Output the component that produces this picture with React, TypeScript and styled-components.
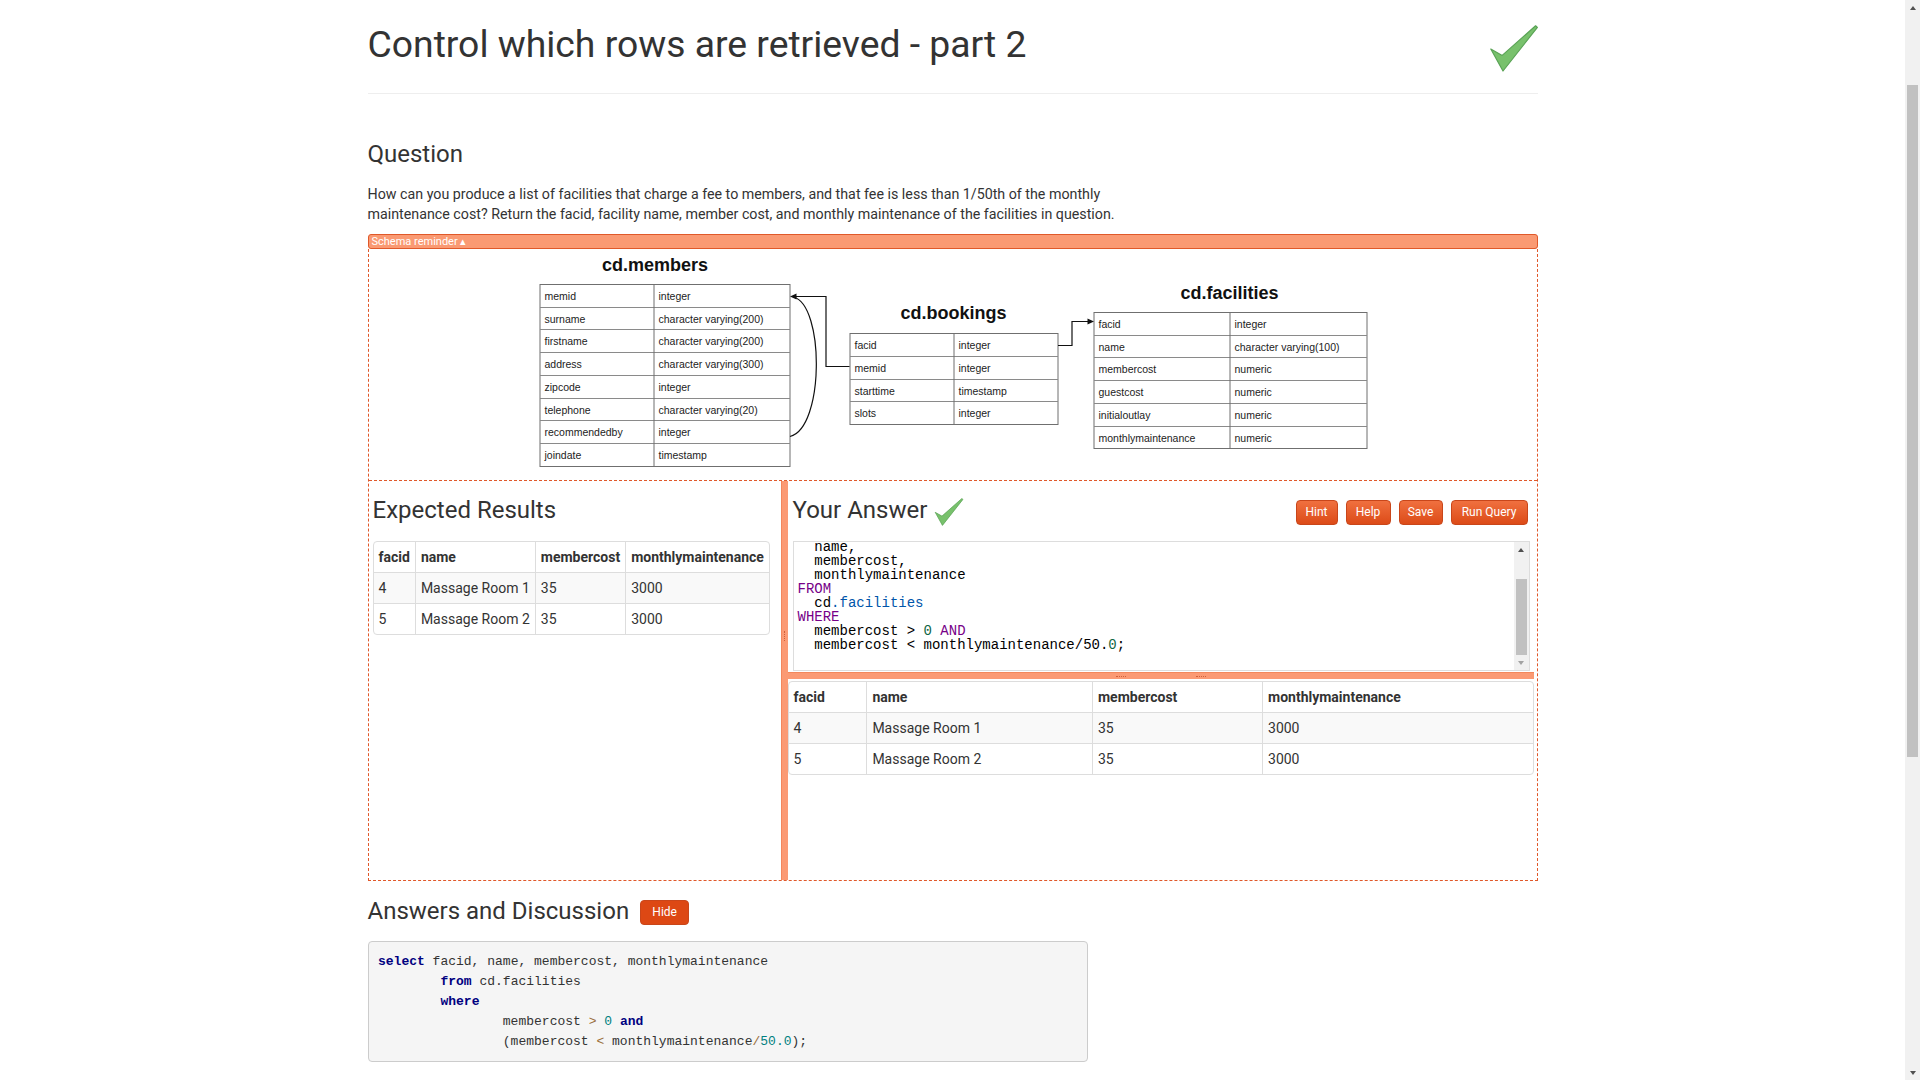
import React, { useLayoutEffect } from "react";
import styled, { createGlobalStyle } from "styled-components";

const GlobalStyle = createGlobalStyle`
  html, body { margin: 0; padding: 0; background: #fff; }
  body {
    font-family: Roboto, "Liberation Sans", Arial, sans-serif;
    font-size: 14px;
    line-height: 20px;
    color: #333;
  }
  *, *::before, *::after { box-sizing: border-box; }
`;

/* frame leaves room for the window scrollbar, drawn on the right */
const Frame = styled.div`
  margin-right: 15px;
`;

const Page = styled.div`
  width: 1170px;
  margin: 0 auto;
  padding-top: 110px;
  padding-bottom: 510px;
`;

/* ---------- scrollbars ---------- */

const WindowScrollbar = styled.div`
  position: fixed;
  top: 0;
  right: 0;
  width: 15px;
  height: 100vh;
  background: #f1f1f1;
  display: flex;
  flex-direction: column;
  align-items: center;
`;

const ScrollTrack = styled.div`
  flex: 0 0 15px;
  width: 15px;
  background: #f1f1f1;
  display: flex;
  flex-direction: column;
  align-items: center;
`;

const ArrowBox = styled.div`
  flex: 0 0 15px;
  width: 15px;
  display: flex;
  align-items: center;
  justify-content: center;
`;

const Arrow = styled.span<{ $down?: boolean; $dim?: boolean }>`
  width: 0;
  height: 0;
  border-left: 3.5px solid transparent;
  border-right: 3.5px solid transparent;
  ${(p) =>
    p.$down
      ? `border-top: 4px solid ${p.$dim ? "#a3a3a3" : "#505050"};`
      : `border-bottom: 4px solid ${p.$dim ? "#a3a3a3" : "#505050"};`}
`;

const Gap = styled.div<{ $h?: number }>`
  flex: ${(p) => (p.$h === undefined ? "1 1 auto" : `0 0 ${p.$h}px`)};
`;

const Thumb = styled.div<{ $h: number }>`
  flex: 0 0 ${(p) => p.$h}px;
  width: 11px;
  background: #c1c1c1;
`;

/* ---------- page parts ---------- */

const Header = styled.header`
  display: flex;
  justify-content: space-between;
  align-items: flex-start;
  height: 94px;
  border-bottom: 1px solid #eee;
`;

const Title = styled.h1`
  margin: 22px 0 0;
  font-size: 37.3px;
  line-height: 44px;
  font-weight: 400;
  color: #333;
`;

const CheckWrap = styled.span<{ $mt: number; $ml?: number }>`
  display: inline-flex;
  margin-top: ${(p) => p.$mt}px;
  margin-left: ${(p) => p.$ml ?? 0}px;
`;

const SectionTitle = styled.h3<{ $mt?: number }>`
  margin: ${(p) => p.$mt ?? 0}px 0 0;
  font-size: 24px;
  line-height: 26px;
  font-weight: 400;
  color: #333;
  white-space: nowrap;
`;

const QuestionText = styled.p`
  margin: 17px 0 0;
  width: 760px;
  font-size: 14.25px;
  line-height: 20px;
`;

const SchemaBar = styled.div`
  margin-top: 10px;
  height: 15px;
  border: 1px solid #e0592a;
  border-radius: 3px;
  background: #fa9a73;
  color: #fff;
  font-size: 11px;
  line-height: 13px;
  padding-left: 3px;
  white-space: nowrap;
`;

const Panel = styled.div`
  border: 1px dashed #e0582a;
  border-top: none;
`;

const SchemaArea = styled.div`
  height: 231px;
  display: flex;
  justify-content: center;
`;

const Workspace = styled.div`
  display: grid;
  grid-template-columns: 412px 7px 1fr;
  height: 400px;
  border-top: 1px dashed #e0582a;
`;

const LeftCol = styled.div`
  padding: 16px 0 0 4px;
`;

const VSplitter = styled.div`
  background: #fb9a74;
  border-left: 1px solid #f3875c;
  display: flex;
  justify-content: center;
  align-items: flex-start;
  padding-top: 150px;
`;

const VGrip = styled.span`
  width: 1px;
  height: 10px;
  border-left: 1px dotted #d0603a;
`;

const RightCol = styled.div`
  display: flex;
  flex-direction: column;
  padding: 16px 3px 0 0;
`;

const AnswerHead = styled.div`
  display: flex;
  align-items: flex-start;
  height: 26px;
  margin: 0 4px 0 5px;
`;

const ButtonBar = styled.div`
  display: flex;
  gap: 8px;
  margin: 3px 2px 0 auto;
`;

const Button = styled.button<{ $solid?: boolean; $w: number }>`
  width: ${(p) => p.$w}px;
  height: 25px;
  padding: 0;
  text-align: center;
  font-family: Roboto, "Liberation Sans", sans-serif;
  font-size: 12px;
  line-height: 23px;
  color: #fff;
  border: 1px solid #c9461a;
  border-radius: 4px;
  background: ${(p) =>
    p.$solid ? "#dd4814" : "linear-gradient(#f0703f, #dc4b18)"};
  cursor: pointer;
`;

const Editor = styled.div`
  margin: 18px 4px 0 5px;
  height: 130px;
  border: 1px solid #ddd;
  background: #fff;
  display: flex;
`;

const CodeView = styled.div`
  flex: 1 1 auto;
  overflow: hidden;
`;

const CodeLines = styled.pre`
  margin: -30px 0 0;
  padding: 0 4px;
  font-family: "Liberation Mono", "DejaVu Sans Mono", monospace;
  font-size: 14px;
  line-height: 14px;
  color: #000;
`;

const CmKw = styled.span`
  color: #708;
`;
const CmVar = styled.span`
  color: #05a;
`;
const CmNum = styled.span`
  color: #164;
`;

const HSplitter = styled.div`
  margin-top: 1px;
  height: 7px;
  background: #fb9a74;
  border-top: 1px solid #f3875c;
  display: flex;
  justify-content: center;
  align-items: center;
  gap: 70px;
`;

const HGrip = styled.span`
  width: 10px;
  height: 1px;
  border-top: 1px dotted #d0603a;
`;

const DataTable = styled.table<{ $full?: boolean; $mt: number }>`
  margin-top: ${(p) => p.$mt}px;
  border-collapse: separate;
  border-spacing: 0;
  border: 1px solid #ddd;
  border-radius: 4px;
  width: ${(p) => (p.$full ? "100%" : "auto")};
  font-size: 14px;
  line-height: 20px;
  color: #333;

  th,
  td {
    padding: 5px;
    text-align: left;
    white-space: nowrap;
    border-top: 1px solid #ddd;
    border-left: 1px solid #ddd;
  }
  th:first-child,
  td:first-child {
    border-left: none;
  }
  thead th {
    border-top: none;
    font-weight: 700;
  }
  tbody tr:nth-child(odd) td {
    background: #f9f9f9;
  }
`;

const AnswersHead = styled.div`
  display: flex;
  align-items: flex-start;
  gap: 11px;
  margin-top: 17px;
  height: 26px;
`;

const HideButtonWrap = styled.div`
  margin-top: 2px;
`;

const SolutionPre = styled.pre`
  margin: 17px 0 0;
  width: 720px;
  padding: 9.5px;
  background: #f5f5f5;
  border: 1px solid #ccc;
  border-radius: 4px;
  font-family: "Liberation Mono", monospace;
  font-size: 13px;
  line-height: 20px;
  color: #333;
`;

const Kw = styled.span`
  color: #000080;
  font-weight: 700;
`;
const Op = styled.span`
  color: #9a6e3a;
`;
const Num = styled.span`
  color: #008080;
`;

/* ---------- icons ---------- */

function CheckMark({ w, h }: { w: number; h: number }) {
  return (
    <svg width={w} height={h} viewBox="0 0 48 47" aria-hidden="true">
      <polygon
        points="0.8,24 12.2,30.4 45.6,0.8 47.4,2.4 13,46"
        fill="#78c16c"
        stroke="#5aa356"
        strokeWidth="1.2"
        strokeLinejoin="round"
      />
    </svg>
  );
}

/* ---------- schema diagram ---------- */

type Row = [string, string];

const members: Row[] = [
  ["memid", "integer"],
  ["surname", "character varying(200)"],
  ["firstname", "character varying(200)"],
  ["address", "character varying(300)"],
  ["zipcode", "integer"],
  ["telephone", "character varying(20)"],
  ["recommendedby", "integer"],
  ["joindate", "timestamp"],
];

const bookings: Row[] = [
  ["facid", "integer"],
  ["memid", "integer"],
  ["starttime", "timestamp"],
  ["slots", "integer"],
];

const facilities: Row[] = [
  ["facid", "integer"],
  ["name", "character varying(100)"],
  ["membercost", "numeric"],
  ["guestcost", "numeric"],
  ["initialoutlay", "numeric"],
  ["monthlymaintenance", "numeric"],
];

type SchemaTableProps = {
  title: string;
  titleX: number;
  titleY: number;
  x0: number;
  x1: number;
  split: number;
  top: number;
  rowH: number;
  rows: Row[];
};

function SchemaTable({ title, titleX, titleY, x0, x1, split, top, rowH, rows }: SchemaTableProps) {
  const ys = rows.map((_, i) => Math.round(top + i * rowH) + 0.5);
  const bottom = Math.round(top + rows.length * rowH) + 0.5;
  return (
    <g>
      <text
        x={titleX}
        y={titleY}
        textAnchor="middle"
        fontFamily='"Liberation Sans", Arial, sans-serif'
        fontWeight="700"
        fontSize="18"
        fill="#111"
      >
        {title}
      </text>
      <rect x={x0 + 0.5} y={ys[0]} width={x1 - x0} height={bottom - ys[0]} fill="#fff" stroke="#6f6f6f" />
      {ys.slice(1).map((y, i) => (
        <line key={i} x1={x0 + 0.5} x2={x1 + 0.5} y1={y} y2={y} stroke="#8a8a8a" />
      ))}
      <line x1={split + 0.5} x2={split + 0.5} y1={ys[0]} y2={bottom} stroke="#6f6f6f" />
      {rows.map((r, i) => (
        <g key={r[0]} fontFamily='"Liberation Sans", Arial, sans-serif' fontSize="10.5" fill="#222">
          <text x={x0 + 5} y={ys[i] + 15}>
            {r[0]}
          </text>
          <text x={split + 5} y={ys[i] + 15}>
            {r[1]}
          </text>
        </g>
      ))}
    </g>
  );
}

function SchemaDiagram() {
  return (
    <svg width="840" height="231" viewBox="0 0 840 231">
      <g transform="translate(-532.5,-249)">
        <SchemaTable
          title="cd.members"
          titleX={654.5}
          titleY={270.5}
          x0={539}
          x1={789}
          split={653}
          top={284}
          rowH={22.7}
          rows={members}
        />
        <SchemaTable
          title="cd.bookings"
          titleX={953}
          titleY={319}
          x0={849}
          x1={1057}
          split={953}
          top={333}
          rowH={22.75}
          rows={bookings}
        />
        <SchemaTable
          title="cd.facilities"
          titleX={1229}
          titleY={298.5}
          x0={1093}
          x1={1366}
          split={1229}
          top={312}
          rowH={22.7}
          rows={facilities}
        />
        <g fill="none" stroke="#111" strokeWidth="1.2">
          <path d="M849 366.5 H825.5 V296.5 H795" />
          <path d="M789.5 436.5 C824 428 824 305 793 297" />
          <path d="M1057.5 345.5 H1071.5 V321.5 H1088" />
        </g>
        <polygon points="789.5,296.5 796,293.5 796,299.5" fill="#111" />
        <polygon points="1093.5,321.5 1087,318.5 1087,324.5" fill="#111" />
      </g>
    </svg>
  );
}

/* ---------- data ---------- */

const resultRows = [
  ["4", "Massage Room 1", "35", "3000"],
  ["5", "Massage Room 2", "35", "3000"],
];
const resultCols = ["facid", "name", "membercost", "monthlymaintenance"];

function ResultTable({ full, mt }: { full?: boolean; mt: number }) {
  return (
    <DataTable $full={full} $mt={mt}>
      <thead>
        <tr>
          {resultCols.map((c) => (
            <th key={c}>{c}</th>
          ))}
        </tr>
      </thead>
      <tbody>
        {resultRows.map((r) => (
          <tr key={r[0]}>
            {r.map((c, i) => (
              <td key={i}>{c}</td>
            ))}
          </tr>
        ))}
      </tbody>
    </DataTable>
  );
}

export default function App() {
  useLayoutEffect(() => {
    window.scrollTo(0, 110);
  }, []);

  return (
    <>
      <GlobalStyle />
      <Frame>
        <Page>
          <Header>
            <Title>Control which rows are retrieved - part 2</Title>
            <CheckWrap $mt={25}>
              <CheckMark w={48} h={47} />
            </CheckWrap>
          </Header>

          <SectionTitle $mt={47}>Question</SectionTitle>
          <QuestionText>
            How can you produce a list of facilities that charge a fee to members, and that fee is less than
            1/50th of the monthly maintenance cost? Return the facid, facility name, member cost, and monthly
            maintenance of the facilities in question.
          </QuestionText>

          <SchemaBar>Schema reminder ▴</SchemaBar>
          <Panel>
            <SchemaArea>
              <SchemaDiagram />
            </SchemaArea>
            <Workspace>
              <LeftCol>
                <SectionTitle>Expected Results</SectionTitle>
                <ResultTable mt={18} />
              </LeftCol>
              <VSplitter>
                <VGrip />
              </VSplitter>
              <RightCol>
                <AnswerHead>
                  <SectionTitle>Your Answer</SectionTitle>
                  <CheckWrap $mt={1} $ml={7}>
                    <CheckMark w={30} h={28} />
                  </CheckWrap>
                  <ButtonBar>
                    <Button $w={42}>Hint</Button>
                    <Button $w={45}>Help</Button>
                    <Button $w={44}>Save</Button>
                    <Button $w={77}>Run Query</Button>
                  </ButtonBar>
                </AnswerHead>
                <Editor>
                  <CodeView>
                    <CodeLines>
                      <CmKw>SELECT</CmKw>
                      {"\n  facid,\n  name,\n  membercost,\n  monthlymaintenance\n"}
                      <CmKw>FROM</CmKw>
                      {"\n  cd"}
                      <CmVar>.facilities</CmVar>
                      {"\n"}
                      <CmKw>WHERE</CmKw>
                      {"\n  membercost > "}
                      <CmNum>0</CmNum> <CmKw>AND</CmKw>
                      {"\n  membercost < monthlymaintenance/50."}
                      <CmNum>0</CmNum>
                      {";"}
                    </CodeLines>
                  </CodeView>
                  <ScrollTrack>
                    <ArrowBox>
                      <Arrow />
                    </ArrowBox>
                    <Gap />
                    <Thumb $h={76} />
                    <ArrowBox>
                      <Arrow $down $dim />
                    </ArrowBox>
                  </ScrollTrack>
                </Editor>
                <HSplitter>
                  <HGrip />
                  <HGrip />
                </HSplitter>
                <ResultTable full mt={2} />
              </RightCol>
            </Workspace>
          </Panel>

          <AnswersHead>
            <SectionTitle>Answers and Discussion</SectionTitle>
            <HideButtonWrap>
              <Button $solid $w={49}>
                Hide
              </Button>
            </HideButtonWrap>
          </AnswersHead>
          <SolutionPre>
            <Kw>select</Kw>
            {" facid, name, membercost, monthlymaintenance\n        "}
            <Kw>from</Kw>
            {" cd.facilities\n        "}
            <Kw>where</Kw>
            {"\n                membercost "}
            <Op>&gt;</Op> <Num>0</Num> <Kw>and</Kw>
            {"\n                (membercost "}
            <Op>&lt;</Op>
            {" monthlymaintenance"}
            <Op>/</Op>
            <Num>50.0</Num>
            {");"}
          </SolutionPre>
        </Page>
      </Frame>
      <WindowScrollbar>
        <ArrowBox>
          <Arrow />
        </ArrowBox>
        <Gap $h={70} />
        <Thumb $h={672} />
        <Gap />
        <ArrowBox>
          <Arrow $down />
        </ArrowBox>
      </WindowScrollbar>
    </>
  );
}
